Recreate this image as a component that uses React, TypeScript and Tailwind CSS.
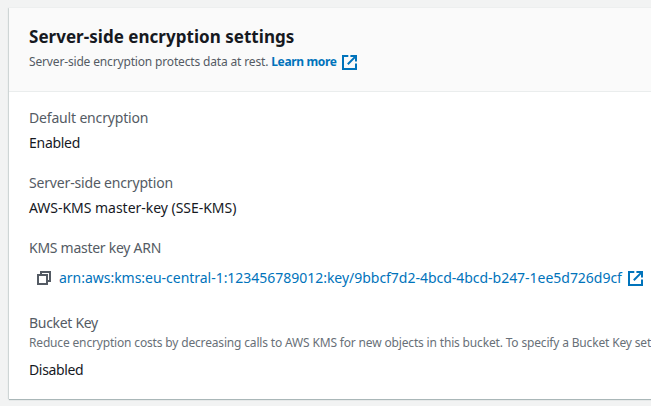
const ExternalIcon = ({ className }: { className: string }) => (
  <svg viewBox="0 0 15 15" fill="none" stroke="currentColor" strokeWidth={2} className={`h-[15px] w-[15px] shrink-0 ${className}`}>
    <path d="M6.3 1H1v13h13V8.6" />
    <path d="M8.4 1H14v5.6M13.6 1.4L5.8 9.2" />
  </svg>
);

const CopyIcon = () => (
  <svg viewBox="0 0 14 14" fill="none" stroke="currentColor" strokeWidth={2} className="h-[14px] w-[14px] shrink-0 text-[#545b64]">
    <path d="M1 4h9v9H1z" />
    <path d="M4 4V1h9v9h-3" />
  </svg>
);

const label = 'block h-5 whitespace-nowrap text-[14px] leading-5 text-[#545b64]';
const value = 'block h-5 whitespace-nowrap text-[14px] leading-5 text-[#16191f]';

export default function App() {
  return (
    <main className="h-[406px] w-[651px] overflow-hidden bg-[#f2f3f3] pt-2 pl-[9px] font-['Noto_Sans',sans-serif]">
      <section className="h-[391px] w-[700px] bg-white shadow-[0_1px_1px_0_#aab7b8,0_1px_0_0_#aab7b8,-1px_0_1px_0_#d5dbdb]">
        <header className="h-[84px] border-b border-[#eaeded] bg-[#fafafa] pt-[17px] pl-5">
          <h2 className="h-6 text-[17px] leading-6 font-bold tracking-[0.03px] whitespace-nowrap text-[#16191f]">
            Server-side encryption settings
          </h2>
          <p className="mt-[3px] flex h-5 items-center text-[12px] leading-5 whitespace-nowrap text-[#545b64]">
            <span className="tracking-[-0.16px]">Server-side encryption protects data at rest.</span>
            <a className="ml-[3px] flex items-center font-bold text-[#0073bb]">
              <span className="tracking-[-0.35px]">Learn more</span>
              <ExternalIcon className="ml-[5px]" />
            </a>
          </p>
        </header>

        <dl className="pt-4 pl-5">
          <dt className={`${label} tracking-[-0.17px]`}>Default encryption</dt>
          <dd className={`${value} mt-[5px] tracking-[-0.28px]`}>Enabled</dd>

          <dt className={`${label} mt-5 tracking-[-0.17px]`}>Server-side encryption</dt>
          <dd className={`${value} mt-[5px] tracking-[-0.03px]`}>AWS-KMS master-key (SSE-KMS)</dd>

          <dt className={`${label} mt-5 tracking-[-0.27px]`}>KMS master key ARN</dt>
          <dd className="mt-[10px] flex h-5 items-center pl-2 text-[14px] leading-5 whitespace-nowrap text-[#0073bb]">
            <CopyIcon />
            <a className="ml-2 tracking-[-0.025px]">arn:aws:kms:eu-central-1:123456789012:key/9bbcf7d2-4bcd-4bcd-b247-1ee5d726d9cf</a>
            <ExternalIcon className="ml-[6px]" />
          </dd>

          <dt className={`${label} mt-[25px] tracking-[-0.3px]`}>Bucket Key</dt>
          <dd className="h-5 text-[12px] leading-5 tracking-[-0.165px] whitespace-nowrap text-[#687078]">
            Reduce encryption costs by decreasing calls to AWS KMS for new objects in this bucket. To specify a Bucket Key set
          </dd>
          <dd className={`${value} mt-[7px] tracking-[-0.35px]`}>Disabled</dd>
        </dl>
      </section>
    </main>
  );
}
